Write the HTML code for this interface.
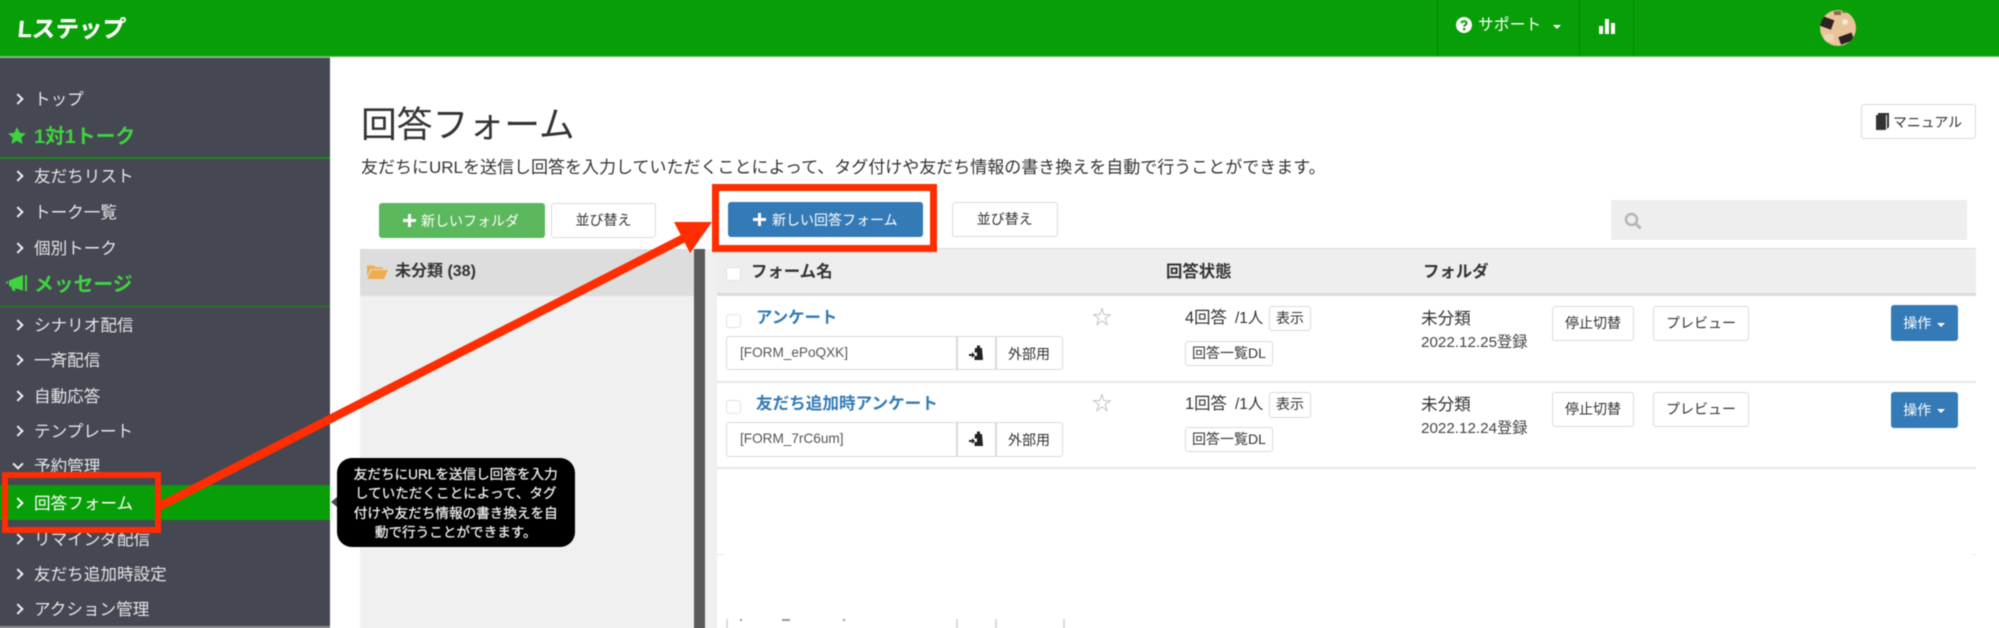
<!DOCTYPE html>
<html lang="ja">
<head>
<meta charset="utf-8">
<title>回答フォーム</title>
<style>
html,body{margin:0;padding:0;width:1999px;height:628px;overflow:hidden;background:#fff}
#w{position:relative;display:block;width:1999px;height:628px;overflow:hidden;contain:strict}
#o{position:absolute;left:-12px;top:-12px;width:2023px;height:652px;overflow:hidden;background:#fff;filter:blur(.45px)}
#p{position:absolute;left:12px;top:12px;width:1999px;height:628px;font-family:"Liberation Sans","Noto Sans CJK JP",sans-serif;color:#333}
#p div,#p svg{position:absolute}
.t{white-space:nowrap}
.n{left:34px;color:#e6e6e8;font-size:16.6px;line-height:24px;height:24px;white-space:nowrap}
.c{left:14px;width:6px;height:6px;border-top:2px solid #eee;border-right:2px solid #eee;transform:rotate(45deg)}
.h{left:34px;color:#3fd43f;font-size:19.8px;font-weight:bold;line-height:28px;height:28px;white-space:nowrap}
.b{box-sizing:border-box;background:#fff;border:1.5px solid #dadada;border-radius:3px;color:#333;font-size:14px;text-align:center;white-space:nowrap}
.bl{box-sizing:border-box;background:#337ab7;border-radius:3px;color:#fff;font-size:14px;text-align:center;white-space:nowrap}
.cb{box-sizing:border-box;left:726px;width:15px;height:14px;background:#fff;border:1.5px solid #e2e2e2;border-radius:3px}
.r{background:#e8e8e8;left:717px;width:1259px;height:2px}
.v{background:#dadada;width:1.5px}
.red{box-sizing:border-box;border:solid #ff2d00}
.caret{width:0;height:0;border-left:4px solid transparent;border-right:4px solid transparent;border-top:4px solid #fff}
</style>
</head>
<body>
<div id="w"><div id="o"><div id="p">
<!-- header -->
<div style="left:-12px;top:-12px;width:2023px;height:68px;background:#089e07"></div>
<div style="left:-12px;top:56px;width:2023px;height:1.2px;background:#5cc45c"></div>
<div class="t" style="left:18px;top:12px;color:#fff;font-size:23.3px;font-weight:bold;line-height:34px;transform:skewX(-5deg);-webkit-text-stroke:.3px #fff">Lステップ</div>
<div style="left:1437px;top:-12px;width:1px;height:68px;background:#078506"></div>
<div style="left:1579px;top:-12px;width:1px;height:68px;background:#078506"></div>
<div style="left:1633px;top:-12px;width:1px;height:68px;background:#078506"></div>
<svg style="left:1456px;top:17px" width="16" height="16" viewBox="0 0 16 16"><circle cx="8" cy="8" r="8" fill="#fff"/><path d="M5.4 6.2C5.5 3.4 10.6 3.4 10.6 6.1 10.6 7.8 8.2 7.8 8.2 9.6" fill="none" stroke="#089e07" stroke-width="2"/><rect x="7" y="11" width="2.4" height="2.2" fill="#089e07"/></svg>
<div class="t" style="left:1478px;top:14px;color:#fff;font-size:15.8px;line-height:24px">サポート</div>
<div class="caret" style="left:1553px;top:25px"></div>
<svg style="left:1599px;top:19px" width="16" height="16" viewBox="0 0 16 16"><rect x="0" y="7" width="4" height="8" fill="#fff"/><rect x="6" y="0" width="4" height="15" fill="#fff"/><rect x="12" y="4" width="4" height="11" fill="#fff"/></svg>
<svg style="left:1820px;top:10px" width="36" height="36" viewBox="0 0 36 36"><defs><clipPath id="av"><ellipse cx="18" cy="18" rx="18" ry="18"/></clipPath></defs><g clip-path="url(#av)"><rect width="36" height="36" fill="#e9c39a"/><rect x="0" y="8" width="13" height="10" fill="#2e231f" transform="rotate(20 7 13)"/><rect x="19" y="25" width="14" height="8" fill="#2b211e" transform="rotate(-20 25 28)"/><rect x="14" y="1" width="7" height="4" fill="#8a6b4a"/><circle cx="25" cy="12" r="3" fill="#f4e7d3"/><rect x="4" y="24" width="10" height="8" fill="#f0d3b3"/><rect x="22" y="0" width="6" height="3" fill="#6f8a4a"/></g></svg>

<!-- sidebar -->
<div style="left:-12px;top:57px;width:341.5px;height:583px;background:#454752"></div>
<div style="left:-12px;top:57px;width:341.5px;height:1.2px;background:#a9abb0"></div>
<div style="left:-12px;top:626px;width:341.5px;height:14px;background:#8a8b92"></div>
<div style="left:-12px;top:485px;width:341.5px;height:35px;background:#089e07"></div>
<div style="left:-12px;top:157px;width:341.5px;height:1.5px;background:#1d8a1d"></div>
<div style="left:-12px;top:305.5px;width:341.5px;height:1.5px;background:#1d8a1d"></div>

<div class="c" style="top:95px"></div><div class="n" style="top:88px">トップ</div>
<svg style="left:8px;top:127px" width="18" height="17" viewBox="0 0 20 19"><polygon points="10,0 12.9,6.4 20,7.2 14.7,11.9 16.2,19 10,15.3 3.8,19 5.3,11.9 0,7.2 7.1,6.4" fill="#3fd43f"/></svg>
<div class="h" style="top:123px">1対1トーク</div>
<div class="c" style="top:172px"></div><div class="n" style="top:165px">友だちリスト</div>
<div class="c" style="top:208px"></div><div class="n" style="top:201px">トーク一覧</div>
<div class="c" style="top:244px"></div><div class="n" style="top:237px">個別トーク</div>
<svg style="left:6px;top:275px" width="22" height="17" viewBox="0 0 22 17"><path d="M0 6.5H2V8.5H0ZM3 5.5L17 0V15.5L9 13.2 9.6 16 6.2 15.5 5.4 11.8 3 11Z" fill="#3fd43f"/><rect x="19" y="0" width="2" height="16" fill="#3fd43f"/></svg>
<div class="h" style="top:270.5px">メッセージ</div>
<div class="c" style="top:321px"></div><div class="n" style="top:314px">シナリオ配信</div>
<div class="c" style="top:356px"></div><div class="n" style="top:349px">一斉配信</div>
<div class="c" style="top:392px"></div><div class="n" style="top:385px">自動応答</div>
<div class="c" style="top:427px"></div><div class="n" style="top:420px">テンプレート</div>
<div class="c" style="top:460px;transform:rotate(135deg)"></div><div class="n" style="top:455px">予約管理</div>
<div class="c" style="top:499px;border-color:#fff"></div><div class="n" style="top:492px;color:#fff">回答フォーム</div>
<div class="c" style="top:535px"></div><div class="n" style="top:528px">リマインダ配信</div>
<div class="c" style="top:570px"></div><div class="n" style="top:563px">友だち追加時設定</div>
<div class="c" style="top:605px"></div><div class="n" style="top:598px">アクション管理</div>

<!-- title -->
<div class="t" style="left:361px;top:100px;font-size:35.8px;line-height:50px;color:#333">回答フォーム</div>
<div class="t" style="left:361px;top:155px;font-size:17px;line-height:25px;color:#333">友だちにURLを送信し回答を入力していただくことによって、タグ付けや友だち情報の書き換えを自動で行うことができます。</div>

<!-- manual -->
<div class="b" style="left:1861px;top:104px;width:115px;height:35px"></div>
<svg style="left:1875px;top:113px" width="15" height="17" viewBox="0 0 15 17"><path d="M3 0H14V14L12 16V2H3Z" fill="#333"/><path d="M1 2H11V17H1Z" fill="#333"/></svg>
<div class="t" style="left:1893px;top:110px;font-size:13.9px;line-height:24px;color:#333">マニュアル</div>

<!-- toolbar -->
<div class="bl" style="left:379px;top:203px;width:166px;height:35px;background:#5cb85c"></div>
<svg style="left:403px;top:214px" width="13" height="13" viewBox="0 0 13 13"><path d="M5 0H8V5H13V8H8V13H5V8H0V5H5Z" fill="#fff"/></svg>
<div class="t" style="left:421px;top:208.5px;color:#fff;font-size:14px;line-height:24px">新しいフォルダ</div>
<div class="b" style="left:551px;top:203px;width:105px;height:35px;line-height:33px">並び替え</div>
<div class="bl" style="left:728px;top:202px;width:195px;height:35px"></div>
<svg style="left:753px;top:213px" width="13" height="13" viewBox="0 0 13 13"><path d="M5 0H8V5H13V8H8V13H5V8H0V5H5Z" fill="#fff"/></svg>
<div class="t" style="left:772px;top:207.5px;color:#fff;font-size:14px;line-height:24px">新しい回答フォーム</div>
<div class="b" style="left:952px;top:202px;width:105.5px;height:35px;line-height:33px">並び替え</div>
<div style="left:1611px;top:200px;width:356px;height:40px;background:#eee"></div>
<svg style="left:1624px;top:212px" width="18" height="18" viewBox="0 0 18 18"><circle cx="7.5" cy="7.5" r="5.5" fill="none" stroke="#b5b5b5" stroke-width="2.4"/><path d="M11.5 11.5L16.5 16.5" stroke="#b5b5b5" stroke-width="3"/></svg>

<!-- left panel -->
<div style="left:360px;top:249px;width:357px;height:391px;background:#f0f0f0"></div>
<div style="left:360px;top:249px;width:334px;height:47px;background:#ddd"></div>
<svg style="left:367px;top:264px" width="21" height="15" viewBox="0 0 21 15"><path d="M0 1.5H7L8.5 3.2H16V5H4L0 12Z" fill="#f0ad4e"/><path d="M4.5 6H21L17 15H0Z" fill="#f0ad4e"/></svg>
<div class="t" style="left:395px;top:260px;font-size:16px;font-weight:bold;line-height:24px;color:#333">未分類 (38)</div>
<div style="left:693.5px;top:249px;width:11px;height:391px;background:#5a5a5a"></div>

<!-- table -->
<div style="left:717px;top:249px;width:1259px;height:44px;background:#eee"></div>
<div style="left:717px;top:248px;width:1259px;height:1.2px;background:#ddd"></div>
<div style="left:717px;top:293px;width:1259px;height:3px;background:#ddd"></div>
<div class="cb" style="top:267px"></div>
<div class="t" style="left:751px;top:260px;font-size:16.4px;font-weight:bold;line-height:24px;color:#333">フォーム名</div>
<div class="t" style="left:1166px;top:260px;font-size:16.4px;font-weight:bold;line-height:24px;color:#333">回答状態</div>
<div class="t" style="left:1423px;top:260px;font-size:16.4px;font-weight:bold;line-height:24px;color:#333">フォルダ</div>

<!-- row 1 -->
<div class="cb" style="top:314px"></div>
<div class="t" style="left:756px;top:306px;font-size:16.4px;font-weight:bold;line-height:24px;color:#337ab7">アンケート</div>
<div class="b" style="left:726px;top:336px;width:337px;height:34px"></div>
<div class="v" style="left:956px;top:336px;height:34px"></div>
<div class="v" style="left:995px;top:336px;height:34px"></div>
<div class="t" style="left:740px;top:341px;font-size:13.6px;line-height:24px;color:#555">[FORM_ePoQXK]</div>
<svg style="left:968px;top:345px" width="16" height="16" viewBox="0 0 16 16"><path d="M7 3H9V0.5H12V3H14L15 15H6.5V11H9V7.5H6.5Z" fill="#222"/><path d="M1 9H4V7L7 10 4 13V11H1Z" fill="#222"/></svg>
<div class="t" style="left:1008px;top:341.5px;font-size:14px;line-height:24px;color:#333">外部用</div>
<div class="t" style="left:1092px;top:304px;font-size:20px;line-height:28px;color:#b0b0b0">☆</div>
<div class="t" style="left:1185px;top:306px;font-size:16.4px;line-height:24px;color:#333">4回答</div>
<div class="t" style="left:1235px;top:307px;font-size:15.5px;line-height:24px;color:#333">/1人</div>
<div class="b" style="left:1269px;top:306px;width:42px;height:25px;line-height:23px">表示</div>
<div class="b" style="left:1185px;top:341px;width:88px;height:24.5px;line-height:22px;color:#333">回答一覧DL</div>
<div class="t" style="left:1421px;top:306.5px;font-size:16.6px;line-height:24px;color:#333">未分類</div>
<div class="t" style="left:1421px;top:331px;font-size:15.2px;line-height:24px;color:#444">2022.12.25登録</div>
<div class="b" style="left:1552px;top:306px;width:82px;height:35px;line-height:33px">停止切替</div>
<div class="b" style="left:1653px;top:306px;width:96px;height:35px;line-height:33px">プレビュー</div>
<div class="bl" style="left:1890.5px;top:305px;width:67.5px;height:36px;line-height:37px;padding-right:14px">操作</div>
<div class="caret" style="left:1937px;top:323px"></div>
<div class="r" style="top:381px"></div>

<!-- row 2 -->
<div class="cb" style="top:400px"></div>
<div class="t" style="left:756px;top:392px;font-size:16.6px;font-weight:bold;line-height:24px;color:#337ab7">友だち追加時アンケート</div>
<div class="b" style="left:726px;top:422px;width:337px;height:35px"></div>
<div class="v" style="left:956px;top:422px;height:35px"></div>
<div class="v" style="left:995px;top:422px;height:35px"></div>
<div class="t" style="left:740px;top:427px;font-size:13.6px;line-height:24px;color:#555">[FORM_7rC6um]</div>
<svg style="left:968px;top:431px" width="16" height="16" viewBox="0 0 16 16"><path d="M7 3H9V0.5H12V3H14L15 15H6.5V11H9V7.5H6.5Z" fill="#222"/><path d="M1 9H4V7L7 10 4 13V11H1Z" fill="#222"/></svg>
<div class="t" style="left:1008px;top:427.5px;font-size:14px;line-height:24px;color:#333">外部用</div>
<div class="t" style="left:1092px;top:390px;font-size:20px;line-height:28px;color:#b0b0b0">☆</div>
<div class="t" style="left:1185px;top:392px;font-size:16.4px;line-height:24px;color:#333">1回答</div>
<div class="t" style="left:1235px;top:393px;font-size:15.5px;line-height:24px;color:#333">/1人</div>
<div class="b" style="left:1269px;top:392px;width:42px;height:25.5px;line-height:23px">表示</div>
<div class="b" style="left:1185px;top:426.5px;width:88px;height:25px;line-height:23px;color:#333">回答一覧DL</div>
<div class="t" style="left:1421px;top:392.5px;font-size:16.6px;line-height:24px;color:#333">未分類</div>
<div class="t" style="left:1421px;top:417px;font-size:15.2px;line-height:24px;color:#444">2022.12.24登録</div>
<div class="b" style="left:1552px;top:392px;width:82px;height:35px;line-height:33px">停止切替</div>
<div class="b" style="left:1653px;top:392px;width:96px;height:35px;line-height:33px">プレビュー</div>
<div class="bl" style="left:1890.5px;top:391.5px;width:67.5px;height:36px;line-height:37px;padding-right:14px">操作</div>
<div class="caret" style="left:1937px;top:409px"></div>
<div class="r" style="top:467px"></div>

<!-- ghost remnants -->
<div style="left:717px;top:554px;width:7px;height:1px;background:#e5e5e5"></div>
<div style="left:1972px;top:554px;width:4px;height:1px;background:#e5e5e5"></div>
<div class="v" style="left:726px;top:619px;height:21px"></div>
<div class="v" style="left:956px;top:619px;height:21px"></div>
<div class="v" style="left:995px;top:619px;height:21px"></div>
<div class="v" style="left:1063px;top:619px;height:21px"></div>
<div style="left:740px;top:619px;width:2px;height:1.5px;background:#999"></div>
<div style="left:782px;top:619px;width:8px;height:1.5px;background:#999"></div>
<div style="left:843px;top:619px;width:2px;height:1.5px;background:#999"></div>

<!-- tooltip -->
<div style="left:331px;top:497px;width:0;height:0;border-top:5px solid transparent;border-bottom:5px solid transparent;border-right:6px solid #454752"></div>
<div style="left:337px;top:458px;width:237.5px;height:89px;background:#000;border-radius:15px"></div>
<div style="left:337px;top:464.5px;width:237.5px;text-align:center;color:#f2f2f2;font-size:13.6px;line-height:19.6px;-webkit-text-stroke:.25px #f2f2f2">友だちにURLを送信し回答を入力<br>していただくことによって、タグ<br>付けや友だち情報の書き換えを自<br>動で行うことができます。</div>

<!-- annotations -->
<div class="red" style="left:1.5px;top:472px;width:159.5px;height:61px;border-width:6px"></div>
<div class="red" style="left:711.5px;top:184px;width:225.5px;height:68px;border-width:7px"></div>
<svg style="left:0;top:0" width="1999" height="628" viewBox="0 0 1999 628"><path d="M160 506L692 234" stroke="#ff2d00" stroke-width="8.5" fill="none"/><polygon points="674,222 712,222 690,253" fill="#ff2d00"/></svg>
</div></div></div>
</body>
</html>
